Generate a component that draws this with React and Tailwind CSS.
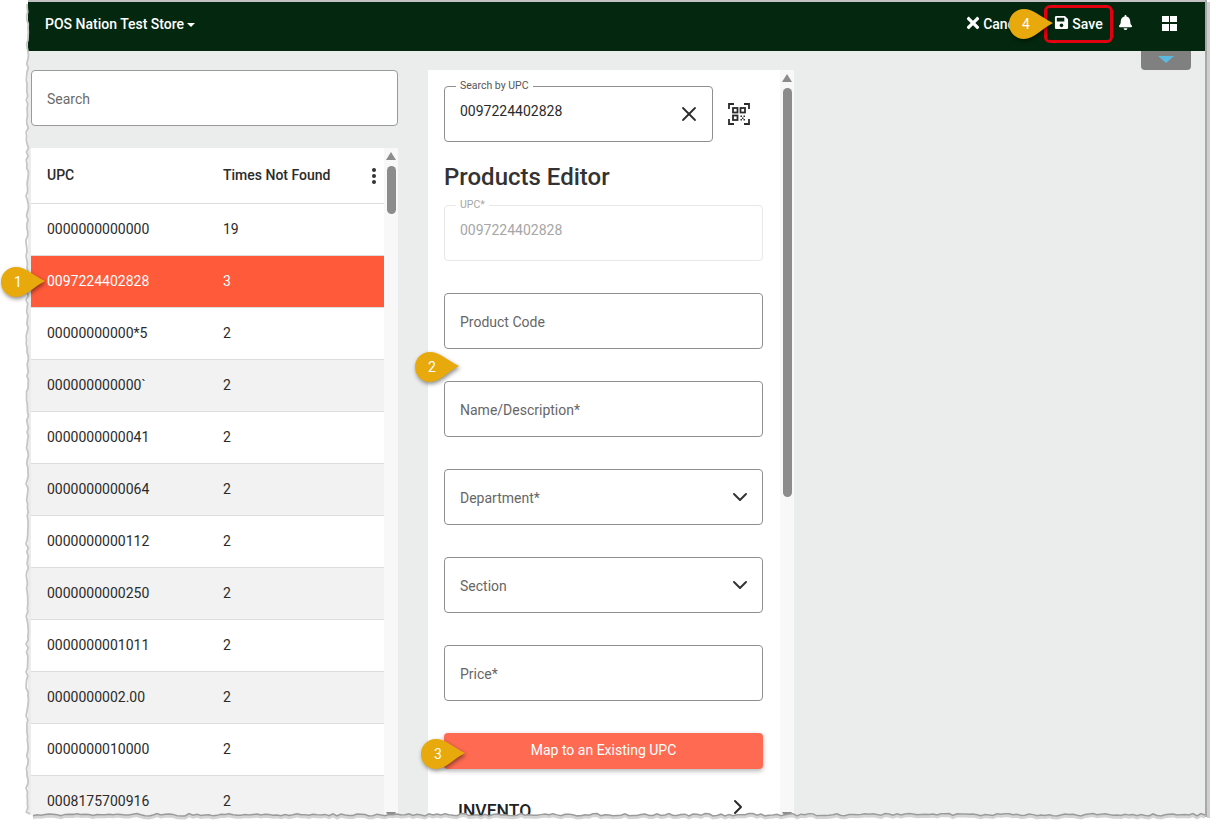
import { FaTimes, FaSave, FaBell } from "react-icons/fa";
import { ChevronDown, ChevronRight, X } from "lucide-react";

const rows = [
  ["0000000000000", "19"],
  ["0097224402828", "3"],
  ["00000000000*5", "2"],
  ["000000000000`", "2"],
  ["0000000000041", "2"],
  ["0000000000064", "2"],
  ["0000000000112", "2"],
  ["0000000000250", "2"],
  ["0000000001011", "2"],
  ["0000000002.00", "2"],
  ["0000000010000", "2"],
  ["0008175700916", "2"],
];

// little repeatable wobble for the torn screenshot edge
function wobble(i, size) {
  const v = Math.sin(i * 12.9898) * 43758.5453;
  return (v - Math.floor(v)) * size;
}

function bottomEdge() {
  const pts = ["M1205 815"];
  for (let x = 1201, i = 0; x > 30; x -= 4, i++) {
    pts.push(`L${x} ${813.5 + wobble(i, 2.5)}`);
  }
  return pts;
}

function leftEdge() {
  const pts = [];
  for (let y = 812, i = 400; y > 2; y -= 4, i++) {
    pts.push(`L${26 + wobble(i, 2.5)} ${y}`);
  }
  return pts;
}

function TornEdge() {
  const bottom = bottomEdge();
  const left = leftEdge();
  const mask = `M0 0H1216V833H0Z M1205 2 L1205 815 ${bottom.slice(1).join(" ")} ${left.join(" ")} L28 2 Z`;
  return (
    <svg className="absolute left-0 top-0 pointer-events-none" width="1216" height="833" viewBox="0 0 1216 833">
      <path d={mask} fillRule="evenodd" fill="#ffffff" />
      <rect x="28" y="0" width="1177" height="2" fill="#c2c2c2" />
      <rect x="1205" y="0" width="2" height="817" fill="#a8a8a8" />
      <rect x="1207" y="2" width="3" height="816" fill="#cfcfcf" />
      <path d={bottom.join(" ")} fill="none" stroke="#d4d4d4" strokeWidth="3" transform="translate(0 2)" />
      <path d={bottom.join(" ")} fill="none" stroke="#9a9a9a" strokeWidth="1.5" />
      <path d={`M30 814 ${left.join(" ")}`} fill="none" stroke="#c6c6c6" strokeWidth="1.8" />
    </svg>
  );
}

function Callout({ n, className }) {
  return (
    <div className={`absolute w-[44px] h-[30px] ${className}`}>
      <svg width="44" height="30" viewBox="0 0 44 30" className="absolute left-0 top-0 drop-shadow-[1px_2px_2px_rgba(0,0,0,0.45)]">
        <path d="M15 0C24 0 32 8 44 14C32 20 25 30 15 30C6 30 0 23 0 15C0 7 6 0 15 0Z" fill="#e8a90c" />
      </svg>
      <span className="absolute left-0 top-0 w-[34px] h-[30px] flex items-center justify-center text-[14px] text-white">
        {n}
      </span>
    </div>
  );
}

function Field({ label, chevron }) {
  return (
    <div className="h-14 w-full border border-[#8f8f8f] rounded flex items-center justify-between pl-[15px] pr-[10px] text-[14px] text-[#666666] shrink-0">
      <span className="pt-[2px]">{label}</span>
      {chevron && <ChevronDown size={24} strokeWidth={2} className="text-[#333333]" />}
    </div>
  );
}

function Scrollbar({ thumbClass }) {
  return (
    <div className="w-[14px] shrink-0 bg-[#f8f8f8] flex flex-col">
      <div className="mx-auto mt-[4px] w-0 h-0 border-l-[5px] border-r-[5px] border-b-[8px] border-l-transparent border-r-transparent border-b-[#8c8c8c]" />
      <div className={`mx-auto w-[9px] rounded-full bg-[#8c8c8c] ${thumbClass}`} />
      <div className="mx-auto mt-auto w-0 h-0 border-l-[5px] border-r-[5px] border-t-[8px] border-l-transparent border-r-transparent border-t-[#8c8c8c]" />
    </div>
  );
}

function QrIcon() {
  return (
    <svg width="22" height="22" viewBox="0 0 22 22" fill="none" stroke="#2b2b2b" strokeWidth="1.8">
      <path d="M1 6V1H6M16 1H21V6M1 16V21H6M16 21H21V16" />
      <rect x="5" y="5" width="4.5" height="4.5" />
      <rect x="12.5" y="5" width="4.5" height="4.5" />
      <rect x="5" y="12.5" width="4.5" height="4.5" />
      <path d="M12.5 12.5h1.5v1.5h-1.5zM15.5 12.5h1.5v1.5h-1.5zM14 14.5h1.5v1.5H14zM12.5 16h1.5v1.5h-1.5zM15.5 16h1.5v1.5h-1.5z" fill="#2b2b2b" stroke="none" />
    </svg>
  );
}

export default function App() {
  return (
    <div className="relative w-[1216px] h-[833px] overflow-hidden bg-white font-['Roboto',sans-serif] text-[14px]">
      <div className="ml-[28px] mt-[2px] w-[1177px] h-[814px] bg-[#ebeded] flex flex-col overflow-hidden">
        <header className="h-[49px] shrink-0 bg-[#03280f] text-white flex items-center pl-[17px] pb-[5px]">
          <span className="font-medium flex items-center">
            POS Nation Test Store
            <span className="ml-[3px] mt-[1px] w-0 h-0 border-l-[4px] border-r-[4px] border-t-[4px] border-l-transparent border-r-transparent border-t-white" />
          </span>
          <div className="ml-auto flex items-center">
            <span className="flex items-center gap-[1px] font-medium">
              <FaTimes size={18} className="mb-[2px]" />
              Cancel
            </span>
            <div className="ml-[18px] w-[69px] h-[38px] border-[3px] border-[#e3000f] rounded-md flex items-center justify-center gap-[3px] font-medium">
              <FaSave size={15} className="mb-[3px]" />
              Save
            </div>
            <FaBell size={15} className="ml-[5px] mb-[3px]" />
            <div className="ml-[29px] mr-[28px] mb-[2px] grid grid-cols-2 gap-[1.5px] w-[15px] h-[15px]">
              <span className="bg-white" />
              <span className="bg-white" />
              <span className="bg-white" />
              <span className="bg-white" />
            </div>
          </div>
        </header>

        <div className="relative flex-1 flex pl-[3px] pt-[19px] gap-[30px] overflow-hidden">
          <div className="absolute right-[14px] top-0 w-[50px] h-[19px] bg-[#808080] rounded-b flex justify-center pt-[5px]">
            <span className="w-0 h-0 border-l-[8px] border-r-[8px] border-t-[7px] border-l-transparent border-r-transparent border-t-[#5bb8de]" />
          </div>

          <div className="w-[367px] shrink-0">
            <div className="h-14 border border-[#9a9a9a] rounded bg-white flex items-center px-[15px] pt-[2px] text-[#6b6b6b]">
              Search
            </div>
            <div className="mt-[22px] bg-white flex h-[672px] overflow-hidden">
              <div className="flex-1 text-[#2b2b2b]">
                <div className="h-14 flex items-center pl-4 font-medium border-b border-[#dddddd]">
                  <span className="w-[176px]">UPC</span>
                  <span>Times Not Found</span>
                  <span className="ml-auto mr-[8px] flex flex-col gap-[2px]">
                    <span className="w-[4px] h-[4px] rounded-full bg-[#333333]" />
                    <span className="w-[4px] h-[4px] rounded-full bg-[#333333]" />
                    <span className="w-[4px] h-[4px] rounded-full bg-[#333333]" />
                  </span>
                </div>
                {rows.map((r, i) => {
                  const selected = i === 1;
                  const rowBg = selected ? "bg-[#ff5a3a] text-white" : i % 2 === 1 ? "bg-[#f2f2f2]" : "bg-white";
                  return (
                    <div key={r[0]} className={`h-[52px] flex items-center pl-4 border-b border-[#dddddd] ${rowBg}`}>
                      <span className="w-[176px]">{r[0]}</span>
                      <span>{r[1]}</span>
                    </div>
                  );
                })}
              </div>
              <Scrollbar thumbClass="mt-[6px] h-[48px]" />
            </div>
          </div>

          <div className="w-[366px] shrink-0 bg-white flex h-[750px] overflow-hidden">
            <div className="flex-1 pl-4 pr-[17px] pt-4 text-[#2b2b2b]">
              <div className="flex items-center">
                <div className="relative h-14 w-[269px] border border-[#8f8f8f] rounded flex items-center justify-between pl-[15px] pr-[11px] pb-[5px]">
                  <span className="absolute left-[11px] top-[-7px] bg-white px-[4px] text-[10.5px] leading-[12px] text-[#555555]">
                    Search by UPC
                  </span>
                  <span>0097224402828</span>
                  <X size={24} strokeWidth={1.8} className="mt-[5px]" />
                </div>
                <div className="ml-[15px]">
                  <QrIcon />
                </div>
              </div>
              <h1 className="mt-[19px] h-[32px] text-[24px] leading-[32px] font-medium text-[#333333]">Products Editor</h1>
              <div className="relative mt-[12px] h-14 border border-[#e8e8e8] rounded flex items-center pl-[15px] pb-[5px] text-[#a6a6a6]">
                <span className="absolute left-[11px] top-[-7px] bg-white px-[4px] text-[10.5px] leading-[12px] text-[#a6a6a6]">
                  UPC*
                </span>
                0097224402828
              </div>
              <div className="mt-8 flex flex-col gap-8">
                <Field label="Product Code" />
                <Field label="Name/Description*" />
                <Field label="Department*" chevron />
                <Field label="Section" chevron />
                <Field label="Price*" />
              </div>
              <button className="mt-8 w-full h-9 pb-[1px] rounded bg-[#ff6b52] text-white shadow-[0_2px_5px_rgba(0,0,0,0.3)]">
                Map to an Existing UPC
              </button>
              <div className="mt-[30px] pl-[14px] pr-[13px] flex items-start justify-between">
                <span className="text-[17.5px] leading-[24px] font-medium text-[#222222]">INVENTO</span>
                <ChevronRight size={24} strokeWidth={2} className="mt-[-4px]" />
              </div>
            </div>
            <Scrollbar thumbClass="mt-[6px] h-[409px]" />
          </div>
        </div>
      </div>

      <TornEdge />

      <Callout n="1" className="left-[1px] top-[267px]" />
      <Callout n="2" className="left-[415px] top-[352px]" />
      <Callout n="3" className="left-[421px] top-[739px]" />
      <Callout n="4" className="left-[1009px] top-[9px]" />
    </div>
  );
}
